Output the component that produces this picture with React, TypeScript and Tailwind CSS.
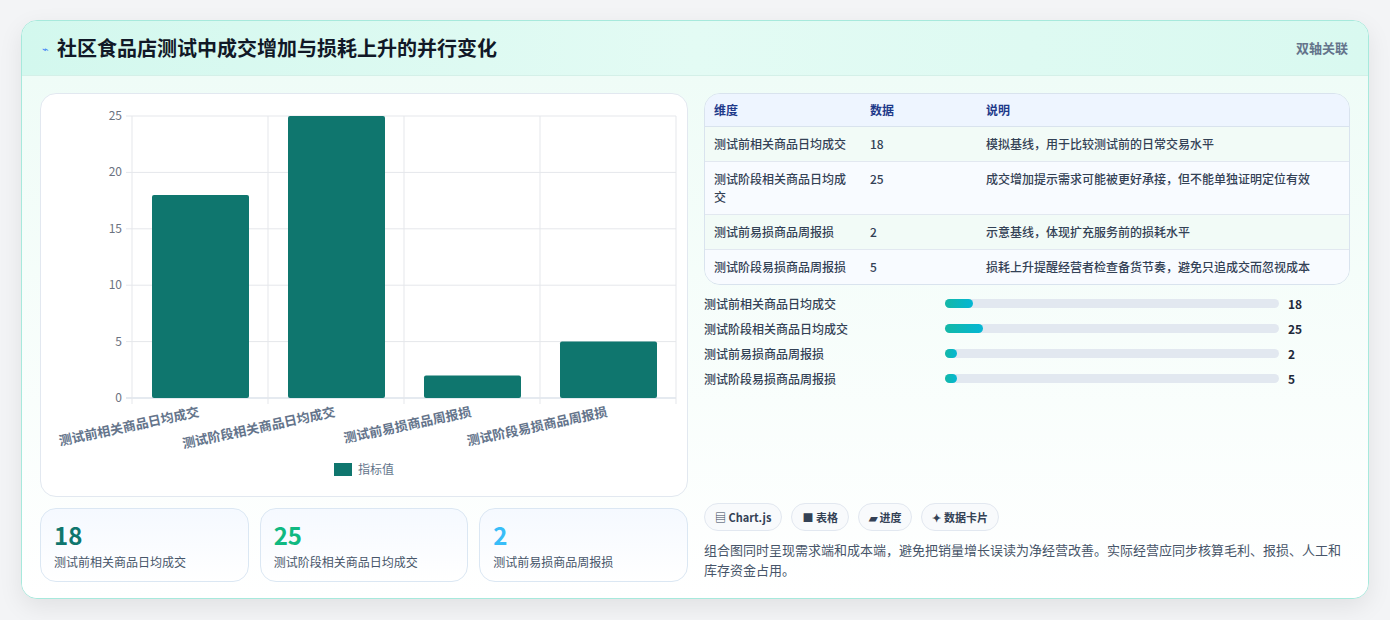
import React from "react";

const F = { fontFamily: '"Noto Sans CJK SC", "Noto Sans", sans-serif' };
const cats = ["测试前相关商品日均成交", "测试阶段相关商品日均成交", "测试前易损商品周报损", "测试阶段易损商品周报损"];
const vals = [18, 25, 2, 5];
const rows = [
  ["测试前相关商品日均成交", "18", "模拟基线，用于比较测试前的日常交易水平"],
  ["测试阶段相关商品日均成交", "25", "成交增加提示需求可能被更好承接，但不能单独证明定位有效"],
  ["测试前易损商品周报损", "2", "示意基线，体现扩充服务前的损耗水平"],
  ["测试阶段易损商品周报损", "5", "损耗上升提醒经营者检查备货节奏，避免只追成交而忽视成本"],
];
const barW = [28, 38, 12, 12];

function Chart() {
  const x0 = 91, x1 = 635, y0 = 304, yT = 22;
  const unit = (y0 - yT) / 25;
  const cw = (x1 - x0) / 4;
  return (
    <svg width="647" height="360" className="block" style={F}>
      {[0, 5, 10, 15, 20, 25].map((t) => {
        const y = y0 - t * unit;
        return (
          <g key={t}>
            <line x1={x0 - 6} x2={x1} y1={y} y2={y} stroke={t === 0 ? "#cbd5e1" : "#e5e7eb"} />
            <text x={x0 - 10} y={y + 4} textAnchor="end" fontSize="12" fill="#6b7280">{t}</text>
          </g>
        );
      })}
      {[0, 1, 2, 3, 4].map((i) => (
        <line key={i} x1={x0 + i * cw} x2={x0 + i * cw} y1={yT} y2={y0 + 6} stroke="#e5e7eb" />
      ))}
      {vals.map((v, i) => (
        <rect key={i} x={x0 + i * cw + 20} y={y0 - v * unit} width={97} height={v * unit} rx="2" fill="#0f766e" />
      ))}
      {cats.map((c, i) => {
        const cx = x0 + i * cw + cw / 2;
        return (
          <text key={i} x={cx} y={322} textAnchor="end" fontSize="13" fontWeight="600" fill="#64748b" transform={`rotate(-12 ${cx} 322)`}>{c}</text>
        );
      })}
    </svg>
  );
}

export default function App() {
  return (
    <div className="w-[1390px] h-[620px] bg-[#f3f4f6] pt-5 pl-[21px]" style={F}>
      <div className="w-[1348px] h-[579px] rounded-2xl border border-[#a7e9dc] bg-white shadow-[0_8px_24px_rgba(0,0,0,0.08)] overflow-hidden flex flex-col">
        <div className="h-[55px] flex items-center justify-between px-5 bg-gradient-to-r from-[#d3f8ee] via-[#e3fbf4] to-[#d9f9f0] border-b border-[#d4f0e8]">
          <div className="flex items-center gap-2">
            <span className="text-[#3b82f6] text-[11px]">⌁</span>
            <span className="text-[20px] font-bold text-[#111827]">社区食品店测试中成交增加与损耗上升的并行变化</span>
          </div>
          <span className="text-[13px] font-semibold text-[#64748b]">双轴关联</span>
        </div>
        <div className="flex-1 flex gap-4 px-[18px] pt-[17px] bg-gradient-to-b from-[#effcf7] to-white">
          <div className="w-[648px] flex flex-col gap-[11px]">
            <div className="h-[404px] rounded-2xl border border-[#e2e8f0] bg-white relative">
              <Chart />
              <div className="absolute left-[293px] top-[366px] flex items-center gap-[6px]">
                <span className="w-[18px] h-[13px] bg-[#0f766e]" />
                <span className="text-[12px] text-[#64748b]">指标值</span>
              </div>
            </div>
            <div className="grid grid-cols-3 gap-[11px]">
              {[["18", "text-[#0f766e]", cats[0]], ["25", "text-[#10b981]", cats[1]], ["2", "text-[#38bdf8]", cats[2]]].map(([n, c, l]) => (
                <div key={n} className="h-[74px] rounded-2xl border border-[#dbe7f3] bg-gradient-to-b from-[#f5f9ff] to-white px-[13px] pt-[11px]">
                  <div className={`text-[24px] font-bold leading-[30px] ${c}`}>{n}</div>
                  <div className="text-[12px] text-[#475569] mt-[3px]">{l}</div>
                </div>
              ))}
            </div>
          </div>
          <div className="flex-1 flex flex-col">
            <div className="rounded-2xl border border-[#d9e3ee] overflow-hidden text-[12px]">
              <div className="flex h-[33px] items-center bg-[#eef5ff] border-b border-[#d9e3ee] font-semibold text-[#1e3a8a]">
                <div className="w-[165px] pl-[9px]">维度</div>
                <div className="w-[116px]">数据</div>
                <div className="flex-1">说明</div>
              </div>
              {rows.map((r, i) => (
                <div key={i} className={`flex py-[8px] leading-[18px] text-[#334155] font-medium ${i % 2 === 0 ? "bg-[#f2fbf7]" : "bg-[#f8fbff]"} ${i < 3 ? "border-b border-[#e2e8f0]" : ""}`}>
                  <div className="w-[165px] pl-[9px] pr-[22px]">{r[0]}</div>
                  <div className="w-[116px]">{r[1]}</div>
                  <div className="flex-1">{r[2]}</div>
                </div>
              ))}
            </div>
            <div className="flex flex-col gap-[8px] mt-[10px] h-[196px]">
              {rows.map((r, i) => (
                <div key={i} className="flex items-center h-[17px] text-[12px] font-medium text-[#334155]">
                  <div className="w-[241px]">{r[0]}</div>
                  <div className="w-[334px] h-[9px] rounded-full bg-[#e2e8f0]">
                    <div className="h-full rounded-full bg-gradient-to-r from-[#14b8a6] to-[#06b6d4]" style={{ width: barW[i] }} />
                  </div>
                  <div className="ml-[9px] font-bold text-[#1e293b]">{r[1]}</div>
                </div>
              ))}
            </div>
            <div className="flex gap-[9px] mt-[12px]">
              {["▤ Chart.js", "■ 表格", "▰ 进度", "✦ 数据卡片"].map((t) => (
                <span key={t} className="h-[28px] px-[10px] flex items-center rounded-full border border-[#e2e8f0] bg-[#f8fafc] text-[11px] font-semibold text-[#334155]">{t}</span>
              ))}
            </div>
            <p className="mt-[9px] text-[13px] leading-[20px] text-[#475569]">组合图同时呈现需求端和成本端，避免把销量增长误读为净经营改善。实际经营应同步核算毛利、报损、人工和库存资金占用。</p>
          </div>
        </div>
      </div>
    </div>
  );
}
